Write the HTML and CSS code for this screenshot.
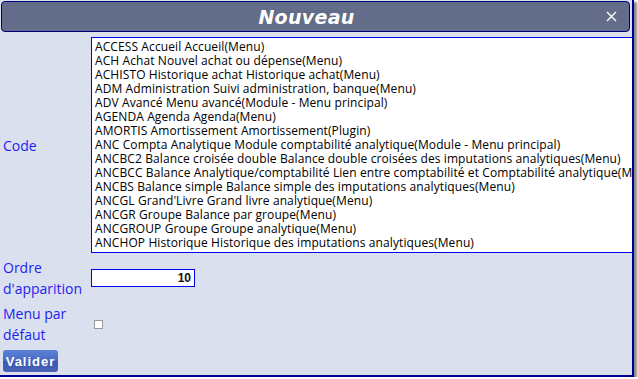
FILE: index.html
```html
<!DOCTYPE html>
<html lang="fr">
<head>
    <meta charset="UTF-8">
    <title>Nouveau</title>
    <link rel="stylesheet" href="styles.css">
</head>
<body>
    <div class="dialog">
        <div class="titlebar">
            <span class="title">Nouveau</span>
            <span class="close">
                <svg width="11" height="11" viewBox="0 0 11 11"><path d="M1 1L10 10M10 1L1 10" stroke="#fff" stroke-width="1.4"/></svg>
            </span>
        </div>

        <form class="form">
            <div class="row">
                <label class="label">Code</label>
                <div class="listbox">
                    <div class="opt">ACCESS Accueil Accueil(Menu)</div>
                    <div class="opt">ACH Achat Nouvel achat ou dépense(Menu)</div>
                    <div class="opt">ACHISTO Historique achat Historique achat(Menu)</div>
                    <div class="opt">ADM Administration Suivi administration, banque(Menu)</div>
                    <div class="opt">ADV Avancé Menu avancé(Module - Menu principal)</div>
                    <div class="opt">AGENDA Agenda Agenda(Menu)</div>
                    <div class="opt">AMORTIS Amortissement Amortissement(Plugin)</div>
                    <div class="opt">ANC Compta Analytique Module comptabilité analytique(Module - Menu principal)</div>
                    <div class="opt">ANCBC2 Balance croisée double Balance double croisées des imputations analytiques(Menu)</div>
                    <div class="opt">ANCBCC Balance Analytique/comptabilité Lien entre comptabilité et Comptabilité analytique(Menu)</div>
                    <div class="opt">ANCBS Balance simple Balance simple des imputations analytiques(Menu)</div>
                    <div class="opt">ANCGL Grand'Livre Grand livre analytique(Menu)</div>
                    <div class="opt">ANCGR Groupe Balance par groupe(Menu)</div>
                    <div class="opt">ANCGROUP Groupe Groupe analytique(Menu)</div>
                    <div class="opt">ANCHOP Historique Historique des imputations analytiques(Menu)</div>
                </div>
            </div>
            <div class="row">
                <label class="label" for="ordre">Ordre d'apparition</label>
                <input class="num" type="text" id="ordre" value="10">
            </div>
            <div class="row">
                <label class="label" for="defaut">Menu par défaut</label>
                <input class="check" type="checkbox" id="defaut">
            </div>
            <button class="btn" type="button">Valider</button>
        </form>
    </div>
</body>
</html>
```

FILE: styles.css
```css
html, body {
    margin: 0;
    padding: 0;
    background: #ffffff;
}
.dialog {
    width: 632px;
    height: 375px;
    background-color: #dae0ee;
    border-right: 2px solid #000090;
    border-bottom: 2px solid #000090;
    box-shadow: 3px 2px 2px #8a8a8a;
    overflow: hidden;
    position: relative;
}
.titlebar {
    margin: 1px 2px 0 1px;
    height: 29px;
    padding-right: 18px;
    background-color: #636d8a;
    border: 1px solid #00007a;
    border-radius: 4px;
    display: flex;
    align-items: center;
    justify-content: center;
    position: relative;
}
.title {
    color: #ffffff;
    font-family: "DejaVu Sans", Verdana, sans-serif;
    font-style: italic;
    font-weight: bold;
    font-size: 19px;
    letter-spacing: 0.3px;
}
.close {
    position: absolute;
    right: 12px;
    top: 9px;
    line-height: 0;
}
.form {
    padding: 3px 0 0 3px;
}
.row {
    display: flex;
    align-items: center;
    padding: 2px 0;
}
.label {
    width: 88px;
    flex: none;
    color: #1e1ef0;
    font-family: "Open Sans", sans-serif;
    font-size: 14px;
    line-height: 21px;
}
.listbox {
    width: 620px;
    flex: none;
    height: 210px;
    padding: 2px 0 2px 3px;
    background: #ffffff;
    border: 1px solid #0000ee;
    font-family: "Open Sans", sans-serif;
    font-size: 12px;
    letter-spacing: 0.1px;
    color: #000000;
    overflow: hidden;
    white-space: nowrap;
}
.opt {
    height: 14px;
    line-height: 14px;
}
.num {
    width: 104px;
    height: 18px;
    box-sizing: border-box;
    border: 1px solid #0000ee;
    padding: 0 3px;
    text-align: right;
    font-family: "Liberation Sans", Arial, sans-serif;
    font-size: 12px;
    font-weight: bold;
    color: #111111;
    background: #ffffff;
    outline: none;
}
.check {
    appearance: none;
    -webkit-appearance: none;
    width: 9px;
    height: 9px;
    margin: 0 0 0 3px;
    border: 1px solid #9a9a9a;
    background: #ffffff;
    box-sizing: border-box;
}
.btn {
    margin-top: 3px;
    width: 55px;
    height: 22px;
    border: none;
    border-radius: 3px;
    background: linear-gradient(#5b82d6 0%, #4a6dc4 45%, #3a58b0 55%, #4a62b8 100%);
    color: #ffffff;
    font-family: "Liberation Sans", Arial, sans-serif;
    font-weight: bold;
    font-size: 13px;
    letter-spacing: 1px;
    padding: 0;
}
```
